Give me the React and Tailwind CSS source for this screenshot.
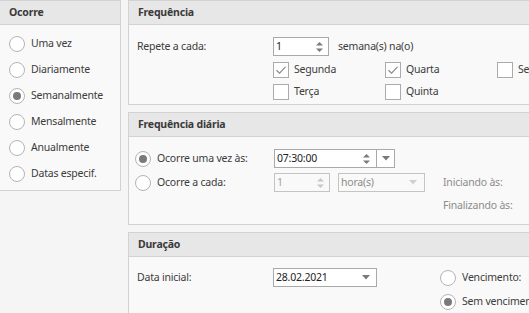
const font = { fontFamily: '"Noto Sans", "Open Sans", sans-serif' }

function Radio({ checked, label, disabled }) {
  return (
    <div className="flex items-center h-[18px]">
      <span className="w-[16px] h-[16px] rounded-full border border-[#b4b4b4] bg-white flex items-center justify-center shrink-0">
        {checked && <span className="w-[8px] h-[8px] rounded-full bg-[#7a7a7a]" />}
      </span>
      <span className={'ml-[6px] whitespace-nowrap ' + (disabled ? 'text-[#8c8c8c]' : 'text-[#3c3c3c]')}>{label}</span>
    </div>
  )
}

function Check({ checked, label }) {
  return (
    <div className="flex items-center w-[112px] h-[17px] shrink-0">
      <span className="w-[16px] h-[16px] border border-[#ababab] bg-white flex items-center justify-center shrink-0">
        {checked && (
          <svg width="12" height="12" viewBox="0 0 12 12">
            <path d="M1.5 6.2 L4.6 9.2 L10.5 2.8" fill="none" stroke="#8a8a8a" strokeWidth="1.2" />
          </svg>
        )}
      </span>
      <span className="ml-[5px] whitespace-nowrap text-[#3c3c3c]">{label}</span>
    </div>
  )
}

function SpinArrows({ color = '#7a7a7a' }) {
  return (
    <svg width="9" height="12" viewBox="0 0 9 12" className="shrink-0">
      <path d="M1 4.5 L4.5 1 L8 4.5 Z" fill={color} />
      <path d="M1 7.5 L4.5 11 L8 7.5 Z" fill={color} />
    </svg>
  )
}

function DropArrow({ color = '#7a7a7a' }) {
  return (
    <svg width="8" height="5" viewBox="0 0 8 5" className="shrink-0">
      <path d="M0 0 H8 L4 4.5 Z" fill={color} />
    </svg>
  )
}

function Panel({ title, children, className }) {
  return (
    <div className={'w-[430px] shrink-0 border border-[#d2d2d2] bg-[#f9f9f9] flex flex-col ' + (className || '')}>
      <div className="h-[24px] bg-[#e7e7e7] border-b border-[#d2d2d2] flex items-center pl-[9px] font-bold text-[#3a3a3a] shrink-0">
        {title}
      </div>
      {children}
    </div>
  )
}

export default function App() {
  return (
    <div className="w-[529px] h-[313px] overflow-hidden bg-[#f5f5f5] flex items-start gap-[7px] text-[10.5px] tracking-[-0.2px]" style={font}>
      <div className="w-[121px] h-[191px] border-r border-b border-t border-[#d2d2d2] bg-[#f9f9f9] shrink-0 flex flex-col">
        <div className="h-[24px] bg-[#e7e7e7] border-b border-[#d2d2d2] flex items-center pl-[9px] font-bold text-[#3a3a3a]">
          Ocorre
        </div>
        <div className="flex flex-col gap-[8px] pl-[9px] pt-[10px]">
          <Radio label="Uma vez" />
          <Radio label="Diariamente" />
          <Radio checked label="Semanalmente" />
          <Radio label="Mensalmente" />
          <Radio label="Anualmente" />
          <Radio label="Datas especif." />
        </div>
      </div>

      <div className="flex flex-col gap-[7px] shrink-0">
        <Panel title="Frequência" className="h-[105px]">
          <div className="pl-[8px] pt-[12px] flex flex-col">
            <div className="flex items-center h-[19px]">
              <span className="w-[136px] text-[#3c3c3c]">Repete a cada:</span>
              <div className="w-[56px] h-[19px] border border-[#a9a9a9] bg-white flex items-center justify-between pl-[2px] pr-[4px] text-[#222]">
                <span>1</span>
                <SpinArrows />
              </div>
              <span className="ml-[9px] text-[#3c3c3c]">semana(s) na(o)</span>
            </div>
            <div className="flex pl-[136px] mt-[5px]">
              <Check checked label="Segunda" />
              <Check checked label="Quarta" />
              <Check label="Sexta" />
            </div>
            <div className="flex pl-[136px] mt-[5px]">
              <Check label="Terça" />
              <Check label="Quinta" />
            </div>
          </div>
        </Panel>

        <Panel title="Frequência diária" className="h-[113px]">
          <div className="pl-[6px] pt-[12px] flex flex-col">
            <div className="flex items-center h-[19px]">
              <div className="w-[139px]">
                <Radio checked label="Ocorre uma vez às:" />
              </div>
              <div className="w-[121px] h-[19px] border border-[#a9a9a9] bg-white flex items-center text-[#222]">
                <span className="flex-1 pl-[2px]">07:30:00</span>
                <span className="pr-[5px] flex items-center"><SpinArrows /></span>
                <span className="w-[18px] h-full border-l border-[#a9a9a9] flex items-center justify-center"><DropArrow /></span>
              </div>
            </div>
            <div className="flex items-center h-[19px] mt-[5px]">
              <div className="w-[139px]">
                <Radio label="Ocorre a cada:" />
              </div>
              <div className="w-[56px] h-[19px] border border-[#c4c4c4] bg-[#f9f9f9] flex items-center justify-between pl-[2px] pr-[4px] text-[#a0a0a0]">
                <span>1</span>
                <SpinArrows color="#c8c8c8" />
              </div>
              <div className="ml-[8px] w-[87px] h-[19px] border border-[#c4c4c4] bg-[#f9f9f9] flex items-center justify-between pl-[2px] pr-[7px] text-[#8c8c8c]">
                <span>hora(s)</span>
                <DropArrow color="#d0d0d0" />
              </div>
              <span className="ml-[18px] text-[#8c8c8c] whitespace-nowrap">Iniciando às:</span>
            </div>
            <div className="flex h-[19px] mt-[4px] pl-[308px] items-center">
              <span className="text-[#8c8c8c] whitespace-nowrap">Finalizando às:</span>
            </div>
          </div>
        </Panel>

        <Panel title="Duração" className="h-[120px]">
          <div className="pl-[8px] pt-[11px] flex">
            <div className="flex items-start">
              <span className="w-[136px] h-[19px] flex items-center text-[#3c3c3c]">Data inicial:</span>
              <div className="w-[104px] h-[19px] border border-[#a9a9a9] bg-white flex items-center justify-between pl-[2px] pr-[6px] text-[#222]">
                <span>28.02.2021</span>
                <DropArrow />
              </div>
            </div>
            <div className="ml-[63px] flex flex-col gap-[6px] pt-[1px]">
              <Radio label="Vencimento:" />
              <Radio checked label="Sem vencimento" />
            </div>
          </div>
        </Panel>
      </div>
    </div>
  )
}
